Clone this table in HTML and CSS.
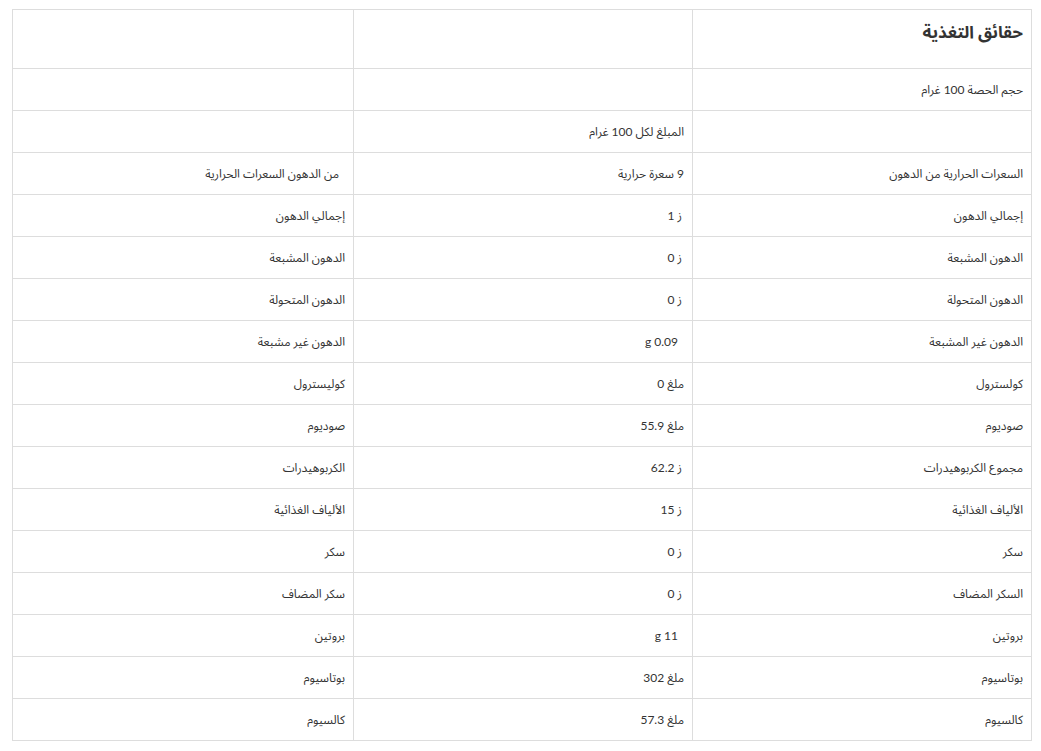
FILE: index.html
```html
<!DOCTYPE html>
<html lang="ar" dir="rtl">
<head>
<meta charset="utf-8">
<title>حقائق التغذية</title>
<link rel="stylesheet" href="styles.css">
</head>
<body>
<table class="facts">
  <colgroup>
    <col class="c-a">
    <col class="c-b">
    <col class="c-c">
  </colgroup>
  <tr class="head-row">
    <th class="title">حقائق التغذية</th>
    <th></th>
    <th></th>
  </tr>
  <tr><td>حجم الحصة 100 غرام</td><td></td><td></td></tr>
  <tr><td></td><td>المبلغ لكل 100 غرام</td><td></td></tr>
  <tr><td>السعرات الحرارية من الدهون</td><td>9 سعرة حرارية</td><td class="ind">من الدهون السعرات الحرارية</td></tr>
  <tr><td>إجمالي الدهون</td><td class="ind-s">ز 1</td><td>إجمالي الدهون</td></tr>
  <tr><td>الدهون المشبعة</td><td class="ind-s">ز 0</td><td>الدهون المشبعة</td></tr>
  <tr><td>الدهون المتحولة</td><td class="ind-s">ز 0</td><td>الدهون المتحولة</td></tr>
  <tr><td>الدهون غير المشبعة</td><td class="ind">0.09 g</td><td>الدهون غير مشبعة</td></tr>
  <tr><td>كولسترول</td><td>ملغ 0</td><td>كوليسترول</td></tr>
  <tr><td>صوديوم</td><td>ملغ 55.9</td><td>صوديوم</td></tr>
  <tr><td>مجموع الكربوهيدرات</td><td class="ind-s">ز 62.2</td><td>الكربوهيدرات</td></tr>
  <tr><td>الألياف الغذائية</td><td class="ind-s">ز 15</td><td>الألياف الغذائية</td></tr>
  <tr><td>سكر</td><td class="ind-s">ز 0</td><td>سكر</td></tr>
  <tr><td>السكر المضاف</td><td class="ind-s">ز 0</td><td>سكر المضاف</td></tr>
  <tr><td>بروتين</td><td class="ind">11 g</td><td>بروتين</td></tr>
  <tr><td>بوتاسيوم</td><td>ملغ 302</td><td>بوتاسيوم</td></tr>
  <tr><td>كالسيوم</td><td>ملغ 57.3</td><td>كالسيوم</td></tr>
</table>
</body>
</html>
```

FILE: styles.css
```css
html, body {
  margin: 0;
  padding: 0;
  background: #fff;
}
body {
  font-family: "Lato", "Noto Sans Arabic UI", "Noto Sans Arabic", "Noto Naskh Arabic", "DejaVu Sans", sans-serif;
  color: #333;
  font-size: 12px;
}
.facts {
  border-collapse: collapse;
  table-layout: fixed;
  width: 1019px;
  margin: 9px 9px 0 0;
}
.c-a { width: 339px; }
.c-b { width: 339px; }
.c-c { width: 341px; }
.facts td, .facts th {
  border: 1px solid #ddd;
  height: 41px;
  padding: 0 8px;
  text-align: right;
  vertical-align: middle;
  font-weight: normal;
}
.facts .head-row th {
  height: 48px;
  vertical-align: top;
}
.facts th.title {
  font-size: 17px;
  font-weight: bold;
  padding-top: 10px;
  color: #333;
}
.facts td.ind {
  padding-right: 14px;
}
.facts td.ind-s {
  padding-right: 10px;
}
```
